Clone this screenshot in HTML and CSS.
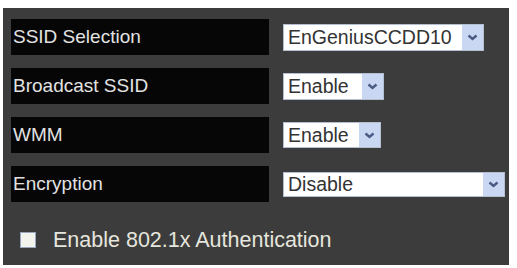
FILE: index.html
```html
<!DOCTYPE html>
<html>
<head>
<meta charset="utf-8">
<link rel="stylesheet" href="styles.css">
</head>
<body>
<div class="panel">
  <div class="rows">
    <div class="row">
      <div class="label">SSID Selection</div>
      <div class="select w1"><span class="val">EnGeniusCCDD10</span><span class="arrow"><svg width="11" height="7" viewBox="0 0 11 7"><path d="M1.5 1.5 L5.5 5 L9.5 1.5" fill="none" stroke="#4a5a82" stroke-width="2.4"/></svg></span></div>
    </div>
    <div class="row">
      <div class="label">Broadcast SSID</div>
      <div class="select w2"><span class="val">Enable</span><span class="arrow"><svg width="11" height="7" viewBox="0 0 11 7"><path d="M1.5 1.5 L5.5 5 L9.5 1.5" fill="none" stroke="#4a5a82" stroke-width="2.4"/></svg></span></div>
    </div>
    <div class="row">
      <div class="label">WMM</div>
      <div class="select w3"><span class="val">Enable</span><span class="arrow"><svg width="11" height="7" viewBox="0 0 11 7"><path d="M1.5 1.5 L5.5 5 L9.5 1.5" fill="none" stroke="#4a5a82" stroke-width="2.4"/></svg></span></div>
    </div>
    <div class="row">
      <div class="label">Encryption</div>
      <div class="select w4"><span class="val">Disable</span><span class="arrow"><svg width="11" height="7" viewBox="0 0 11 7"><path d="M1.5 1.5 L5.5 5 L9.5 1.5" fill="none" stroke="#4a5a82" stroke-width="2.4"/></svg></span></div>
    </div>
  </div>
  <div class="auth">
    <span class="check"></span>
    <span class="auth-text">Enable 802.1x Authentication</span>
  </div>
</div>
</body>
</html>
```
FILE: styles.css
```css
html, body {
  margin: 0;
  padding: 0;
  background: #ffffff;
}
body {
  font-family: "Liberation Sans", Arial, sans-serif;
}
.panel {
  margin: 8px 8px 3px 3px;
  width: 506px;
  height: 257px;
  box-sizing: border-box;
  background: #3c3c3c;
  padding: 11px 0 0 8px;
}
.rows {
  display: flex;
  flex-direction: column;
  gap: 13px;
}
.row {
  display: flex;
  align-items: center;
  height: 36px;
}
.label {
  width: 258px;
  height: 36px;
  box-sizing: border-box;
  background: #060606;
  color: #e2e2e2;
  font-size: 19px;
  padding-left: 2px;
  display: flex;
  align-items: center;
}
.select {
  margin-left: 14px;
  box-sizing: border-box;
  height: 27px;
  background: #ffffff;
  border: 1px solid #b4c0d2;
  display: flex;
  align-items: stretch;
  color: #333333;
  font-size: 19.5px;
}
.select .val {
  flex: 1;
  padding-left: 4px;
  display: flex;
  align-items: center;
  white-space: nowrap;
}
.select .arrow {
  width: 21px;
  background: #c9d7f3;
  display: flex;
  align-items: center;
  justify-content: center;
}
.w1 { width: 201px; }
.w2 { width: 101px; }
.w3 { width: 98px; height: 26px; }
.w4 { width: 222px; height: 25px; }
.auth {
  margin-top: 23px;
  height: 30px;
  display: flex;
  align-items: center;
}
.check {
  margin-left: 9px;
  width: 16px;
  height: 16px;
  box-sizing: border-box;
  background: #f4f4ee;
  border: 1px solid #9aa6c0;
}
.auth-text {
  margin-left: 17px;
  color: #e6e6de;
  font-size: 21.5px;
}
```
